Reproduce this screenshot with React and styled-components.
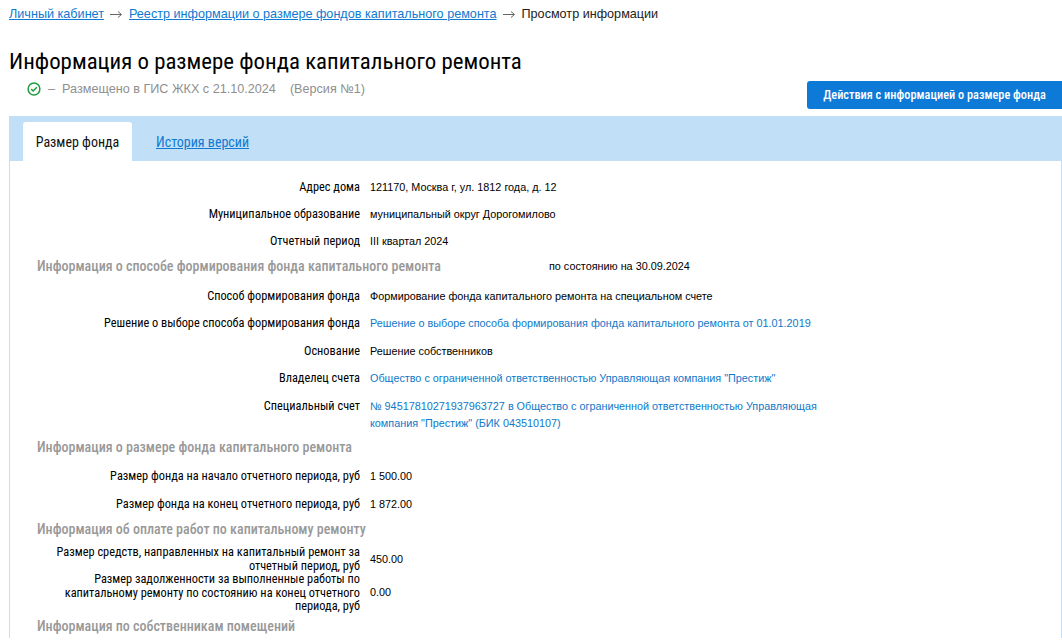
import React from "react";
import styled, { createGlobalStyle } from "styled-components";

const Global = createGlobalStyle`
  html, body { margin: 0; padding: 0; background: #fff; overflow: hidden; }
  body { font-family: "Liberation Sans", Arial, sans-serif; color: #000; }
`;
const Page = styled.div`width: 1062px; height: 644px; overflow: hidden;`;
const Crumbs = styled.nav`
  display: flex; align-items: center; height: 14px; padding: 7px 0 0 9px;
  font-size: 12.64px; line-height: 14px; white-space: nowrap;
`;
const CrumbLink = styled.a`color: #0e7ad1; text-decoration: underline;`;
const ArrowBox = styled.svg`margin: 1px 7px 0 6px; flex: none;`;
const Current = styled.span`color: #222;`;
const Header = styled.div`display: flex; justify-content: space-between; align-items: flex-start; height: 95px;`;
const TitleBlock = styled.div`padding: 0 0 0 9px;`;
const Title = styled.h1`
  margin: 27px 0 0; font: 400 22.85px/28px Roboto, sans-serif; font-stretch: 84%; color: #000; white-space: nowrap;
`;
const Status = styled.div`
  display: flex; align-items: center; margin: 5px 0 0 18px; height: 16px; color: #8f8f8f;
  font-size: 12.64px; white-space: nowrap;
`;
const Dash = styled.span`margin: 0 7px 0 7px;`;
const Version = styled.span`margin-left: 14px;`;
const ActionButton = styled.button`
  margin-top: 60px; width: 255px; height: 28px; border: 0; border-radius: 3px 0 0 3px; padding: 0;
  background: #0e7ad8; color: #fff; font: 500 12.3px Roboto, sans-serif; font-stretch: 79%; cursor: pointer;
`;
const Panel = styled.section`margin: 0 0 0 9px; border-left: 1px solid #c2dff7; border-right: 1px solid #c2dff7;`;
const TabBar = styled.div`
  display: flex; align-items: flex-end; height: 45px; margin-left: -1px; margin-right: -1px;
  background: #c1dff7; padding-left: 14px;
`;
const ActiveTab = styled.div`
  width: 109px; height: 39px; display: flex; align-items: center; justify-content: center;
  background: #fff; border-radius: 3px 3px 0 0; font: 400 14px Roboto, sans-serif; font-stretch: 85%; color: #111;
`;
const TabLink = styled.a`
  margin: 0 0 11px 24px; line-height: 18px; font: 400 14px Roboto, sans-serif; font-stretch: 85%; color: #0e7ad1; text-decoration: underline;
`;
const Content = styled.div`padding-top: 14px;`;
const Row = styled.div`
  display: grid; grid-template-columns: 350px 460px; column-gap: 10px; align-items: ${p => p.$center ? "center" : "start"};
  min-height: ${p => p.$h || 27}px;
`;
const Label = styled.div`
  text-align: right; font: 400 12.34px/13.5px Roboto, sans-serif; font-stretch: 82%; color: #000;
  padding: ${p => p.$top ?? 6}px 0 0 30px;
`;
const Value = styled.div`
  font-size: 10.82px; line-height: 17px; color: #000; padding: ${p => p.$top ?? 4}px 0 ${p => p.$bottom || 0}px;
`;
const LinkValue = styled(Value)`color: #0e78c9;`;
const Heading = styled.div`
  box-sizing: border-box; display: flex; padding: ${p => p.$pt || 0}px 0 ${p => p.$pb || 0}px 27px; height: ${p => p.$h || 24}px; align-items: center;
  font: 500 14px/16px Roboto, sans-serif; font-stretch: 84%; color: #999; white-space: nowrap;
`;
const Asof = styled.span`
  position: absolute; left: 549px; font: 400 10.82px "Liberation Sans", sans-serif; color: #000;
`;
const CheckIcon = () => (
  <svg width="14" height="14" viewBox="0 0 14 14" fill="none">
    <circle cx="7" cy="7" r="5.9" stroke="#1f9c3e" strokeWidth="1.5" />
    <path d="M4.2 7.1 6.2 9 9.8 5.2" stroke="#1f9c3e" strokeWidth="1.5" />
  </svg>
);
const Arrow = () => (
  <ArrowBox width="12" height="9" viewBox="0 0 12 9" fill="none">
    <path d="M0 4.5H11M8 1.5 11.5 4.5 8 7.5" stroke="#666" strokeWidth="1" />
  </ArrowBox>
);

export default function App() {
  return (
    <Page>
      <Global />
      <Crumbs>
        <CrumbLink>Личный кабинет</CrumbLink><Arrow />
        <CrumbLink>Реестр информации о размере фондов капитального ремонта</CrumbLink><Arrow />
        <Current>Просмотр информации</Current>
      </Crumbs>
      <Header>
        <TitleBlock>
          <Title>Информация о размере фонда капитального ремонта</Title>
          <Status>
            <CheckIcon /><Dash>–</Dash>Размещено в ГИС ЖКХ с 21.10.2024<Version>(Версия №1)</Version>
          </Status>
        </TitleBlock>
        <ActionButton>Действия с информацией о размере фонда</ActionButton>
      </Header>
      <Panel>
        <TabBar>
          <ActiveTab>Размер фонда</ActiveTab>
          <TabLink>История версий</TabLink>
        </TabBar>
        <Content>
          <Row><Label>Адрес дома</Label><Value>121170, Москва г, ул. 1812 года, д. 12</Value></Row>
          <Row><Label>Муниципальное образование</Label><Value>муниципальный округ Дорогомилово</Value></Row>
          <Row $h={24}><Label>Отчетный период</Label><Value>III квартал 2024</Value></Row>
          <Heading $h={31} $pb={5}>Информация о способе формирования фонда капитального ремонта<Asof>по состоянию на 30.09.2024</Asof></Heading>
          <Row><Label>Способ формирования фонда</Label><Value>Формирование фонда капитального ремонта на специальном счете</Value></Row>
          <Row $h={28}><Label>Решение о выборе способа формирования фонда</Label><LinkValue>Решение о выборе способа формирования фонда капитального ремонта от 01.01.2019</LinkValue></Row>
          <Row><Label>Основание</Label><Value>Решение собственников</Value></Row>
          <Row $h={28}><Label>Владелец счета</Label><LinkValue>Общество с ограниченной ответственностью Управляющая компания "Престиж"</LinkValue></Row>
          <Row $h={40}><Label>Специальный счет</Label><LinkValue>№ 94517810271937963727 в Общество с ограниченной ответственностью Управляющая компания "Престиж" (БИК 043510107)</LinkValue></Row>
          <Heading $h={30} $pb={4}>Информация о размере фонда капитального ремонта</Heading>
          <Row $h={28}><Label>Размер фонда на начало отчетного периода, руб</Label><Value>1 500.00</Value></Row>
          <Row $h={25}><Label>Размер фонда на конец отчетного периода, руб</Label><Value>1 872.00</Value></Row>
          <Heading $h={29} $pb={5}>Информация об оплате работ по капитальному ремонту</Heading>
          <Row $h={25} $center><Label $top={0}>Размер средств, направленных на капитальный ремонт за отчетный период, руб</Label><Value $top={0} $bottom={1}>450.00</Value></Row>
          <Row $h={40} $center><Label $top={0}>Размер задолженности за выполненные работы по капитальному ремонту по состоянию на конец отчетного периода, руб</Label><Value $top={0} $bottom={2}>0.00</Value></Row>
          <Heading $h={24}>Информация по собственникам помещений</Heading>
        </Content>
      </Panel>
    </Page>
  );
}
